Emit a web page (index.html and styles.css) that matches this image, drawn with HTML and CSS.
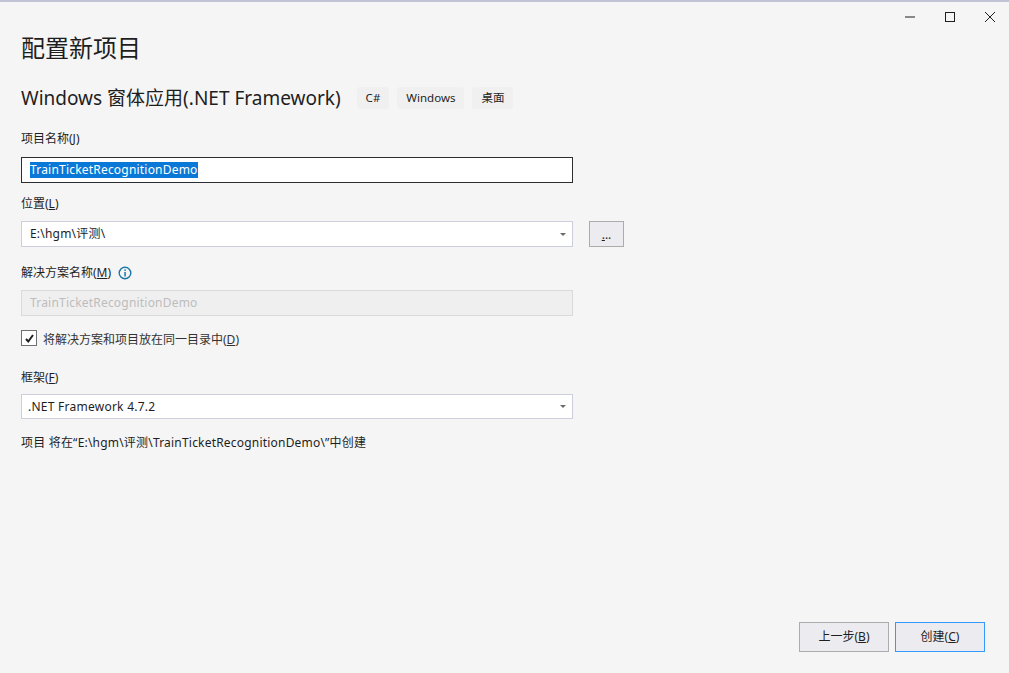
FILE: index.html
```html
<!DOCTYPE html>
<html lang="zh">
<head>
<meta charset="utf-8">
<title>配置新项目</title>
<link rel="stylesheet" href="styles.css">
</head>
<body>
<div class="window">
  <div class="titlebar">
    <svg class="winicon" width="12" height="2" viewBox="0 0 12 2"><rect x="1" y="0.5" width="10" height="1" fill="#1e1e1e"/></svg>
    <svg class="winicon" width="12" height="12" viewBox="0 0 12 12"><rect x="1.5" y="1.5" width="9" height="9" fill="none" stroke="#1e1e1e"/></svg>
    <svg class="winicon" width="12" height="12" viewBox="0 0 12 12"><path d="M1 1L11 11M11 1L1 11" stroke="#1e1e1e" fill="none"/></svg>
  </div>
  <main class="content">
    <h1 class="title">配置新项目</h1>
    <div class="subtitle-row">
      <h2 class="subtitle">Windows 窗体应用(.NET Framework)</h2>
      <div class="chips">
        <span class="chip">C#</span>
        <span class="chip">Windows</span>
        <span class="chip">桌面</span>
      </div>
    </div>
    <div class="label lbl-name">项目名称(<u>J</u>)</div>
    <div class="box box-focus"><span class="selected">TrainTicketRecognitionDemo</span></div>
    <div class="label lbl-loc">位置(<u>L</u>)</div>
    <div class="loc-row">
      <div class="box box-combo"><span>E:\hgm\评测\</span><i class="arrow"></i></div>
      <div class="browse"><u>.</u>..</div>
    </div>
    <div class="label lbl-sln">解决方案名称(<u>M</u>)
      <svg class="info" width="14" height="14" viewBox="0 0 14 14"><circle cx="7" cy="7" r="5.8" fill="none" stroke="#1b76a8" stroke-width="1.4"/><rect x="6.3" y="6" width="1.5" height="4.5" fill="#1b76a8"/><rect x="6.3" y="3.4" width="1.5" height="1.5" fill="#1b76a8"/></svg>
    </div>
    <div class="box box-disabled">TrainTicketRecognitionDemo</div>
    <div class="check-row">
      <span class="checkbox"><svg width="11" height="11" viewBox="0 0 11 11"><path d="M2 6L4.3 8.5L9 2" fill="none" stroke="#1e1e1e" stroke-width="2"/></svg></span>
      <span class="check-text">将解决方案和项目放在同一目录中(<u>D</u>)</span>
    </div>
    <div class="label lbl-fw">框架(<u>F</u>)</div>
    <div class="box box-combo box-fw"><span>.NET Framework 4.7.2</span><i class="arrow"></i></div>
    <div class="label note">项目 将在“E:\hgm\评测\TrainTicketRecognitionDemo\”中创建</div>
  </main>
  <footer class="footer">
    <div class="btn">上一步(<u>B</u>)</div>
    <div class="btn btn-default">创建(<u>C</u>)</div>
  </footer>
</div>
</body>
</html>
```
FILE: styles.css
```css
* { box-sizing: border-box; }
html, body { margin: 0; padding: 0; }
body {
  width: 1009px;
  height: 673px;
  overflow: hidden;
  background: #f5f5f5;
  color: #1e1e1e;
  font-family: "Noto Sans", "Noto Sans CJK SC", sans-serif;
  font-size: 12px;
}
.window {
  height: 673px;
  border-top: 2px solid #c3c3d6;
  display: flex;
  flex-direction: column;
}
.titlebar {
  height: 30px;
  flex: none;
  display: flex;
  justify-content: flex-end;
  align-items: center;
  gap: 28px;
  padding: 0 13px 0 0;
}
.winicon { display: block; }
.content {
  flex: 1;
  padding: 0 0 0 21px;
  display: flex;
  flex-direction: column;
  align-items: flex-start;
}
.title {
  margin: 0;
  font-size: 24px;
  font-weight: 400;
  line-height: 32px;
  height: 32px;
}
.subtitle-row {
  margin-top: 18px;
  display: flex;
  align-items: center;
  height: 32px;
}
.subtitle {
  margin: 0;
  font-size: 19px;
  font-weight: 400;
  line-height: 32px;
  white-space: nowrap;
}
.chips { display: flex; gap: 8px; margin-left: 16px; }
.chip {
  height: 22px;
  line-height: 22px;
  padding: 0 9px;
  font-size: 11.5px;
  background: #f0f0f0;
  border-radius: 3px;
}
.label { line-height: 18px; height: 18px; white-space: nowrap; display: flex; align-items: center; }
.label u { text-underline-offset: 1px; }
.lbl-name { margin-top: 16px; }
.lbl-loc { margin-top: 12px; }
.lbl-sln { margin-top: 17px; }
.lbl-fw { margin-top: 21px; }
.note { margin-top: 15px; letter-spacing: 0.2px; }
.info { margin-left: 7px; }
.box {
  width: 552px;
  height: 26px;
  margin-top: 8px;
  border: 1px solid #cccedb;
  background: #fff;
  padding-left: 8px;
  line-height: 24px;
  white-space: nowrap;
  letter-spacing: 0.2px;
}
.box-focus { border-color: #2d2d30; margin-top: 9px; }
.selected { background: #0a78d7; color: #fff; display: inline-block; line-height: 16px; }
.box-disabled { background: #efefef; color: #bdbdbd; border-color: #dadada; }
.box-combo { display: flex; align-items: center; justify-content: space-between; padding-right: 6px; }
.box-fw { height: 25px; padding-left: 6px; margin-top: 7px; letter-spacing: 0.25px; }
.arrow {
  width: 0;
  height: 0;
  border-left: 3px solid transparent;
  border-right: 3px solid transparent;
  border-top: 3px solid #6a6a6a;
}
.loc-row { display: flex; gap: 16px; }
.browse {
  width: 35px;
  height: 26px;
  margin-top: 8px;
  border: 1px solid #acacac;
  background: #ecebf0;
  text-align: center;
  line-height: 26px;
}
.check-row { display: flex; align-items: center; margin-top: 14px; height: 18px; }
.checkbox {
  width: 16px;
  height: 16px;
  margin-bottom: 2px;
  border: 1px solid #707070;
  background: #fff;
  display: flex;
  align-items: center;
  justify-content: center;
}
.check-text { margin-left: 6px; color: #333; }
.footer {
  flex: none;
  display: flex;
  justify-content: flex-end;
  gap: 6px;
  padding: 0 24px 21px 0;
}
.btn {
  width: 90px;
  height: 30px;
  border: 1px solid #acacac;
  background: #ecebf0;
  text-align: center;
  line-height: 28px;
}
.btn-default { border-color: #3399ff; }
```
